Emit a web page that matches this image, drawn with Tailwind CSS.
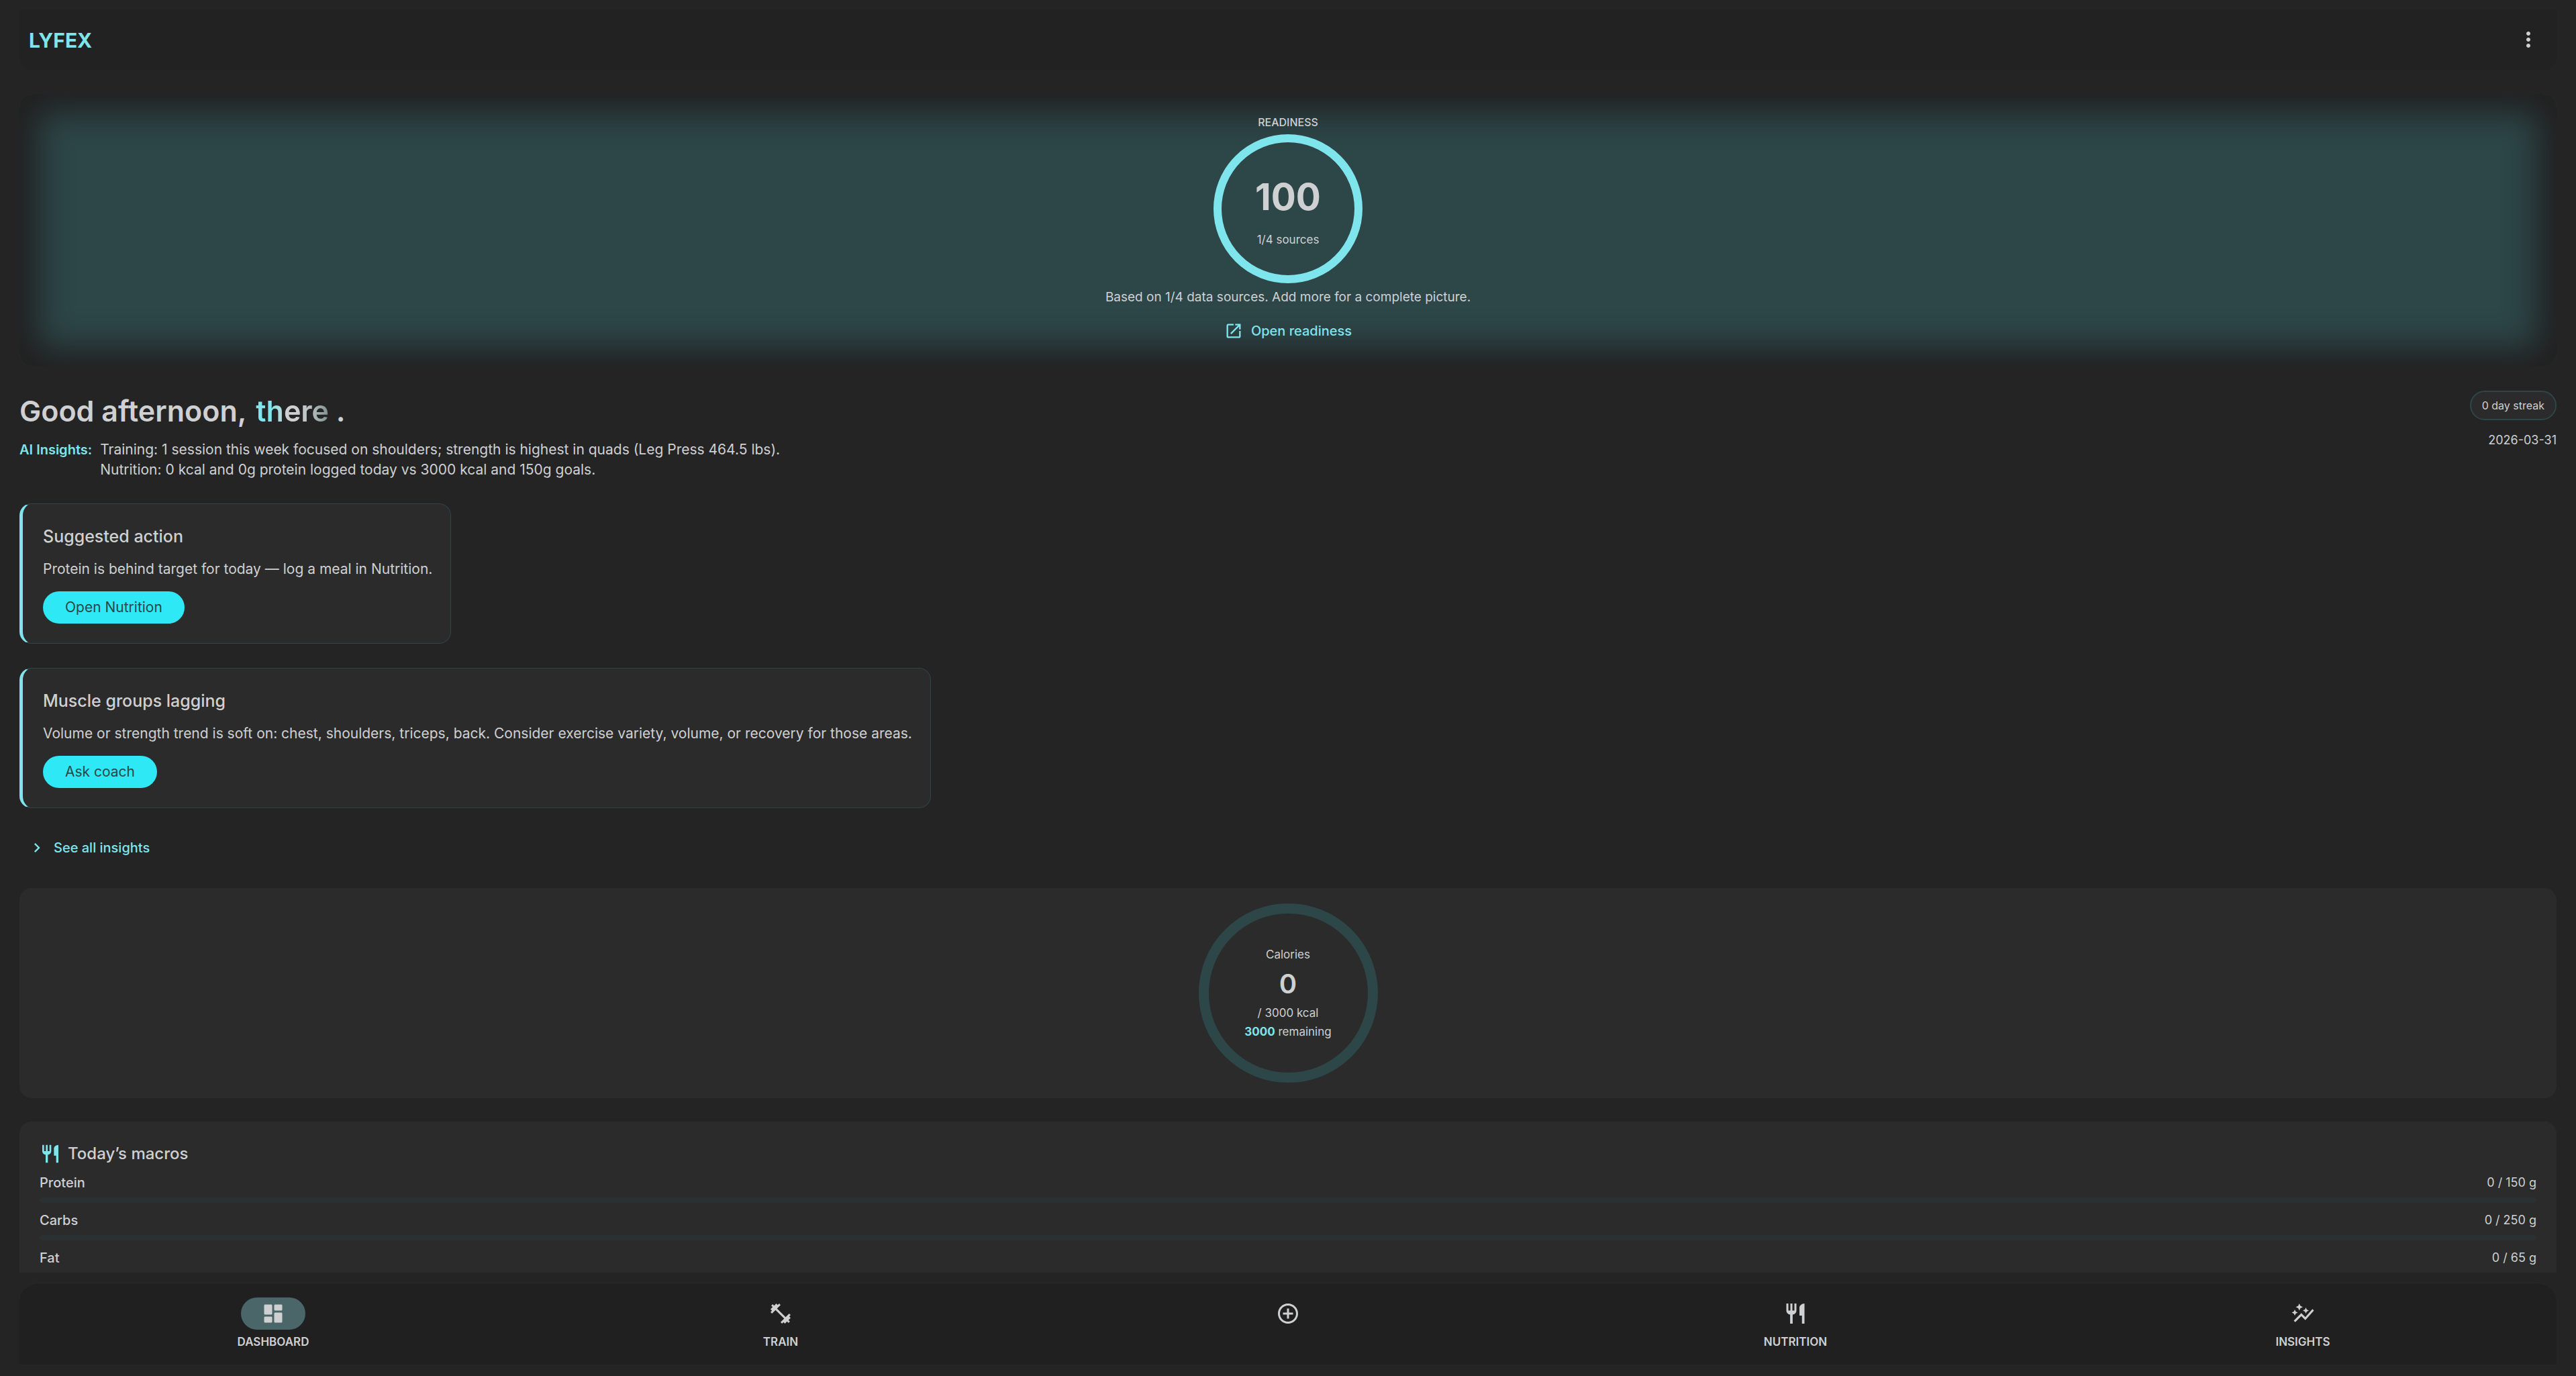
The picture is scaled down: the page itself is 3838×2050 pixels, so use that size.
<!DOCTYPE html>
<html lang="en">
<head>
<meta charset="utf-8">
<meta name="viewport" content="width=device-width, initial-scale=1">
<title>LYFEX – Dashboard</title>
<script src="https://cdn.jsdelivr.net/npm/@tailwindcss/browser@4"></script>
</head>
<body class="flex h-screen flex-col overflow-hidden bg-[#242424] px-[29px] pb-[17px] pt-[14px] font-[Inter,'Noto_Sans',sans-serif] text-[#cfd0d2]">

<header class="flex h-[90px] shrink-0 items-center justify-between rounded-b-[20px] bg-[#222222] pl-[14px] pr-[24px]">
  <a href="#" class="pt-[2px] text-[30px] font-bold leading-[40px] text-[#7fe5ed]">LYFEX</a>
  <button type="button" aria-label="Menu" class="flex size-[36px] items-center justify-center">
    <svg viewBox="0 0 24 24" class="size-[36px]" fill="currentColor"><path d="M12 8c1.1 0 2-.9 2-2s-.9-2-2-2-2 .9-2 2 .9 2 2 2m0 2c-1.1 0-2 .9-2 2s.9 2 2 2 2-.9 2-2-.9-2-2-2m0 6c-1.1 0-2 .9-2 2s.9 2 2 2 2-.9 2-2-.9-2-2-2"/></svg>
  </button>
</header>

<main class="flex min-h-0 flex-1 flex-col overflow-hidden pt-[36px]">

  <section class="flex h-[406px] shrink-0 flex-col items-center rounded-[20px] bg-[#2d4648] pt-[32px] shadow-[inset_0_0_48px_28px_#212121]">
    <h2 class="text-[16px] font-medium leading-[20px]">READINESS</h2>
    <div class="mt-[8px] flex size-[222px] flex-col items-center rounded-full border-[12px] border-[#7fe5ed] pt-[45px]">
      <span class="text-[55px] font-bold leading-[72px]">100</span>
      <span class="mt-[16px] text-[17px] leading-[24px]">1/4 sources</span>
    </div>
    <p class="mt-[9px] text-[19px] leading-[24px]">Based on 1/4 data sources. Add more for a complete picture.</p>
    <a href="#" class="mt-[24px] flex items-center gap-[12px] text-[20px] font-medium leading-[28px] text-[#7fe5ed]">
      <svg viewBox="0 0 24 24" class="size-[28px]" fill="currentColor"><path d="M19 19H5V5h7V3H5c-1.11 0-2 .9-2 2v14c0 1.1.89 2 2 2h14c1.1 0 2-.9 2-2v-7h-2zM14 3v2h3.590l-9.830 9.830 1.410 1.410L19 6.410V10h2V3z"/></svg>
      Open readiness
    </a>
  </section>

  <section class="mt-[36px] flex shrink-0 items-start justify-between">
    <div>
      <h1 class="text-[43px] font-semibold leading-[60px]">Good afternoon, <span class="bg-linear-to-r from-[#7fe5ed] from-25% via-[#cfd0d2] via-45% to-[#7c8c8e] bg-clip-text pl-[4px] text-transparent"><span class="bg-linear-to-r from-[#cfd0d2]/0 from-40% via-[#cfd0d2] via-50% to-[#cfd0d2]/0 bg-clip-text">there</span></span> .</h1>
      <div class="mt-[13px] flex gap-[12px] leading-[30px]">
        <span class="text-[20px] font-semibold text-[#7fe5ed]">AI Insights:</span>
        <p class="text-[21px]">Training: 1 session this week focused on shoulders; strength is highest in quads (Leg Press 464.5 lbs).<br>Nutrition: 0 kcal and 0g protein logged today vs 3000 kcal and 150g goals.</p>
      </div>
    </div>
    <div class="flex flex-col items-end">
      <span class="flex h-[44px] items-center rounded-full border-2 border-[#2d4648] bg-[#2b2b2b] px-[16px] text-[16px]">0 day streak</span>
      <time datetime="2026-03-31" class="mt-[18px] text-[18px] leading-[24px]">2026-03-31</time>
    </div>
  </section>

  <article class="mt-[35px] flex h-[209px] shrink-0 flex-col items-start self-start rounded-[18px] border border-l-[5px] border-[#2d4648] border-l-[#7fe5ed] bg-[#2b2b2b] pl-[30px] pr-[27px] pt-[32px]">
    <h3 class="text-[25px] font-medium leading-[32px]">Suggested action</h3>
    <p class="mt-[19px] text-[21px] leading-[28px]">Protein is behind target for today — log a meal in Nutrition.</p>
    <button type="button" class="mt-[19px] h-[48px] rounded-full bg-[#2ee8f5] px-[33px] text-[21px] text-[#2d4648]">Open Nutrition</button>
  </article>

  <article class="mt-[36px] flex h-[209px] shrink-0 flex-col items-start self-start rounded-[18px] border border-l-[5px] border-[#2d4648] border-l-[#7fe5ed] bg-[#2b2b2b] pl-[30px] pr-[27px] pt-[32px]">
    <h3 class="text-[25px] font-medium leading-[32px]">Muscle groups lagging</h3>
    <p class="mt-[19px] text-[21px] leading-[28px]">Volume or strength trend is soft on: chest, shoulders, triceps, back. Consider exercise variety, volume, or recovery for those areas.</p>
    <button type="button" class="mt-[19px] h-[48px] rounded-full bg-[#2ee8f5] px-[33px] text-[21px] text-[#2d4648]">Ask coach</button>
  </article>

  <a href="#" class="mt-[45px] flex shrink-0 items-center gap-[11px] self-start pl-[12px] text-[20px] font-medium leading-[28px] text-[#7fe5ed]">
    <svg viewBox="0 0 24 24" class="size-[28px]" fill="currentColor"><path d="M10 6 8.590 7.410 13.170 12l-4.580 4.590L10 18l6-6z"/></svg>
    See all insights
  </a>

  <section class="mt-[46px] flex h-[313px] shrink-0 items-center justify-center rounded-[18px] bg-[#2b2b2b]">
    <div class="flex size-[267px] flex-col items-center rounded-full border-[15px] border-[#2d4648] pt-[47px] text-[17px] leading-[28px]">
      <h2>Calories</h2>
      <span class="mt-[4px] text-[40px] font-semibold leading-[52px]">0</span>
      <span class="mt-[3px]">/ 3000 kcal</span>
      <span><b class="font-bold text-[#7fe5ed]">3000</b> remaining</span>
    </div>
  </section>

  <section class="mt-[35px] flex shrink-0 flex-col rounded-t-[18px] bg-[#2b2b2b] px-[30px] pb-[30px] pt-[32px]">
    <h2 class="flex items-center gap-[10px] text-[24px] font-medium leading-[32px]">
      <svg viewBox="0 0 24 24" class="size-[32px] text-[#7fe5ed]" fill="currentColor"><path d="M11 9H9V2H7v7H5V2H3v7c0 2.120 1.660 3.840 3.750 3.970V22h2.500v-9.030C11.340 12.840 13 11.120 13 9V2h-2zm5-3v8h2.500v8H21V2c-2.760 0-5 2.240-5 4"/></svg>
      Today’s macros
    </h2>
    <div class="mt-[13px] flex flex-col gap-[12px]">
      <div>
        <div class="flex justify-between text-[20px] leading-[28px]"><span class="font-medium">Protein</span><span class="text-[18px]">0 / 150 g</span></div>
        <div class="mt-[8px] h-[8px] rounded-full bg-[#2b3032]"></div>
      </div>
      <div>
        <div class="flex justify-between text-[20px] leading-[28px]"><span class="font-medium">Carbs</span><span class="text-[18px]">0 / 250 g</span></div>
        <div class="mt-[8px] h-[8px] rounded-full bg-[#2b3032]"></div>
      </div>
      <div>
        <div class="flex justify-between text-[20px] leading-[28px]"><span class="font-medium">Fat</span><span class="text-[18px]">0 / 65 g</span></div>
        <div class="mt-[8px] h-[8px] rounded-full bg-[#2b3032]"></div>
      </div>
    </div>
  </section>
</main>

<nav class="mt-[15px] grid h-[122px] shrink-0 grid-cols-5 rounded-t-[28px] rounded-b-[4px] border-t border-[#2a2a2a] bg-[#202020] pt-[21px] text-[17px] font-semibold leading-[20px]">
  <a href="#" aria-current="page" class="flex flex-col items-center gap-[8px]">
    <span class="flex h-[48px] w-[96px] items-center justify-center rounded-full bg-[#4b6669]"><svg viewBox="0 0 24 24" class="size-[36px]" fill="currentColor"><path d="M4 13h6c.55 0 1-.45 1-1V4c0-.55-.45-1-1-1H4c-.55 0-1 .45-1 1v8c0 .55.45 1 1 1m0 8h6c.55 0 1-.45 1-1v-4c0-.55-.45-1-1-1H4c-.55 0-1 .45-1 1v4c0 .55.45 1 1 1m10 0h6c.55 0 1-.45 1-1v-8c0-.55-.45-1-1-1h-6c-.55 0-1 .45-1 1v8c0 .55.45 1 1 1M13 4v4c0 .55.45 1 1 1h6c.55 0 1-.45 1-1V4c0-.55-.45-1-1-1h-6c-.55 0-1 .45-1 1"/></svg></span>
    DASHBOARD
  </a>
  <a href="#" class="flex flex-col items-center gap-[8px]">
    <span class="flex h-[48px] items-center"><svg viewBox="0 0 24 24" class="size-[36px]" fill="currentColor"><path d="M20.570 14.860 22 13.430 20.570 12 17 15.570 8.430 7 12 3.430 10.570 2 9.140 3.430 7.710 2 5.570 4.140 4.140 2.710 2.710 4.140l1.430 1.430L2 7.710l1.430 1.430L2 10.570 3.430 12 7 8.430 15.570 17 12 20.570 13.430 22l1.430-1.430L16.290 22l2.140-2.140 1.430 1.430 1.430-1.430-1.430-1.430L22 16.290z"/></svg></span>
    TRAIN
  </a>
  <a href="#" aria-label="Add" class="flex flex-col items-center">
    <span class="flex h-[48px] items-center"><svg viewBox="0 0 24 24" class="size-[36px]" fill="currentColor"><path d="M13 7h-2v4H7v2h4v4h2v-4h4v-2h-4zm-1-5C6.480 2 2 6.480 2 12s4.480 10 10 10 10-4.480 10-10S17.520 2 12 2m0 18c-4.410 0-8-3.590-8-8s3.590-8 8-8 8 3.590 8 8-3.590 8-8 8"/></svg></span>
  </a>
  <a href="#" class="flex flex-col items-center gap-[8px]">
    <span class="flex h-[48px] items-center"><svg viewBox="0 0 24 24" class="size-[36px]" fill="currentColor"><path d="M11 9H9V2H7v7H5V2H3v7c0 2.120 1.660 3.840 3.750 3.970V22h2.500v-9.030C11.340 12.840 13 11.120 13 9V2h-2zm5-3v8h2.500v8H21V2c-2.760 0-5 2.240-5 4"/></svg></span>
    NUTRITION
  </a>
  <a href="#" class="flex flex-col items-center gap-[8px]">
    <span class="flex h-[48px] items-center"><svg viewBox="0 0 24 24" class="size-[36px]" fill="currentColor"><path d="M14.060 9.940 12 9l2.060-.940L15 6l.940 2.060L18 9l-2.060.940L15 12zM4 14l.940-2.060L7 11l-2.060-.940L4 8l-.940 2.060L1 11l2.060.940zm4.500-5 1.090-2.410L12 5.500 9.590 4.410 8.500 2 7.410 4.410 5 5.500l2.410 1.090zm-4 11.500 6-6.010 4 4L23 8.930l-1.410-1.410-7.090 7.970-4-4L3 19z"/></svg></span>
    INSIGHTS
  </a>
</nav>
</body>
</html>
